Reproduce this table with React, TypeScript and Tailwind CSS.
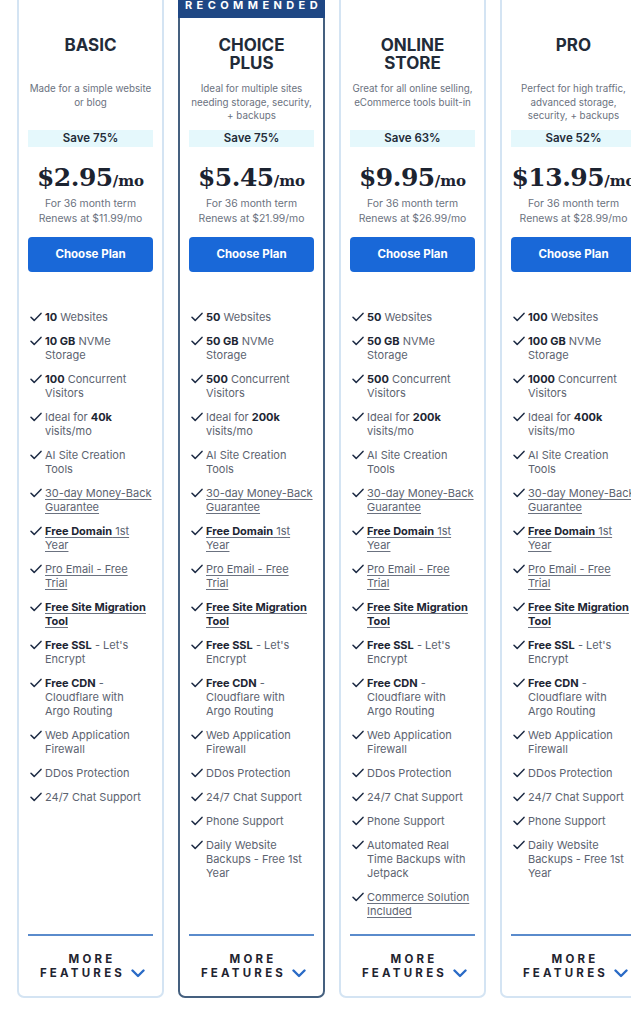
import React from 'react';

type Seg = { t: string; b?: boolean; u?: boolean };
type Feature = Seg[];

type Plan = {
  name: string[];
  desc: string;
  save: string;
  price: string;
  renew: string;
  recommended?: boolean;
  features: Feature[];
};

const s = (t: string): Seg => ({ t });
const b = (t: string): Seg => ({ t, b: true });
const u = (t: string): Seg => ({ t, u: true });
const bu = (t: string): Seg => ({ t, b: true, u: true });

const common = (sites: string, gb: string, visitors: string, visits: string): Feature[] => [
  [b(sites), s(' Websites')],
  [b(gb), s(' NVMe Storage')],
  [b(visitors), s(' Concurrent Visitors')],
  [s('Ideal for '), b(visits), s(' visits/mo')],
  [s('AI Site Creation Tools')],
  [u('30-day Money-Back Guarantee')],
  [bu('Free Domain'), u(' 1st Year')],
  [u('Pro Email - Free Trial')],
  [bu('Free Site Migration Tool')],
  [b('Free SSL'), s(" - Let's Encrypt")],
  [b('Free CDN'), s(' - Cloudflare with\nArgo Routing')],
  [s('Web Application Firewall')],
  [s('DDos Protection')],
  [s('24/7 Chat Support')],
];

const plans: Plan[] = [
  {
    name: ['BASIC'],
    desc: 'Made for a simple website or blog',
    save: 'Save 75%',
    price: '$2.95',
    renew: '$11.99/mo',
    features: common('10', '10 GB', '100', '40k'),
  },
  {
    name: ['CHOICE', 'PLUS'],
    desc: 'Ideal for multiple sites needing storage, security, + backups',
    save: 'Save 75%',
    price: '$5.45',
    renew: '$21.99/mo',
    recommended: true,
    features: [
      ...common('50', '50 GB', '500', '200k'),
      [s('Phone Support')],
      [s('Daily Website Backups - Free 1st Year')],
    ],
  },
  {
    name: ['ONLINE', 'STORE'],
    desc: 'Great for all online selling, eCommerce tools built-in',
    save: 'Save 63%',
    price: '$9.95',
    renew: '$26.99/mo',
    features: [
      ...common('50', '50 GB', '500', '200k'),
      [s('Phone Support')],
      [s('Automated Real Time Backups with Jetpack')],
      [u('Commerce Solution Included')],
    ],
  },
  {
    name: ['PRO'],
    desc: 'Perfect for high traffic, advanced storage,\nsecurity, + backups',
    save: 'Save 52%',
    price: '$13.95',
    renew: '$28.99/mo',
    features: [
      ...common('100', '100 GB', '1000', '400k'),
      [s('Phone Support')],
      [s('Daily Website Backups - Free 1st Year')],
    ],
  },
];

function Check() {
  return (
    <svg width="12" height="10" viewBox="0 0 12 10" className="shrink-0 mt-[2px] -ml-[1px]">
      <path d="M1 5.2 L4.2 8.4 L11 1.4" fill="none" stroke="#1d2b44" strokeWidth="1.5" strokeLinecap="round" strokeLinejoin="round" />
    </svg>
  );
}

function PlanCard({ plan }: { plan: Plan }) {
  return (
    <div
      className={`w-[147px] shrink-0 flex flex-col border-2 rounded-b-[7px] bg-white ${
        plan.recommended ? 'border-[#45607f]' : 'border-[#d4e4f3]'
      }`}
    >
      {plan.recommended ? (
        <div className="-mx-[2px] -mt-[2px] h-[26px] bg-[#1f4784] flex items-center justify-center text-white font-bold text-[11px] tracking-[0.4em] pl-[4px]">
          RECOMMENDED
        </div>
      ) : (
        <div className="h-[24px]" />
      )}

      <div className="px-[9px] flex flex-col flex-1">
        <div className="pt-[18px] h-[54px] text-center text-[17px] font-bold leading-[18px] text-[#222b38]">
          {plan.name.map((n) => (
            <div key={n}>{n}</div>
          ))}
        </div>

        <p className="mt-[10px] -mx-[2px] h-[41px] text-center text-[9.8px] leading-[13.5px] text-[#6b7280] whitespace-pre-line">
          {plan.desc}
        </p>

        <div className="mt-[7px] h-[17px] bg-[#e5f8fc] flex items-center justify-center text-[11.5px] font-semibold text-[#222b38]">
          {plan.save}
        </div>

        <div
          className="mt-[15px] h-[32px] flex items-baseline justify-center text-[#1c2330] font-bold"
          style={{ fontFamily: '"DejaVu Serif", serif' }}
        >
          <span className="text-[25px] leading-[32px] tracking-[-0.5px]">{plan.price}</span>
          <span className="text-[15px]">/mo</span>
        </div>

        <div className="mt-[2px] text-center text-[10.4px] leading-[15px] text-[#6b7280]">
          <div>For 36 month term</div>
          <div>Renews at {plan.renew}</div>
        </div>

        <button className="mt-[11px] h-[35px] w-full rounded-[4px] bg-[#1968d8] text-white text-[11.5px] font-bold">
          Choose Plan
        </button>

        <ul className="mt-[38px] flex-1 flex flex-col gap-[10px] pb-[16px] pl-[3px]">
          {plan.features.map((f, i) => (
            <li key={i} className="flex gap-[3px] text-[11px] leading-[14px]">
              <Check />
              <span className="text-[#5c6370] whitespace-pre-line">
                {f.map((seg, j) => (
                  <span
                    key={j}
                    className={`${seg.b ? 'font-bold text-[#1d2633]' : ''} ${
                      seg.u ? 'underline underline-offset-2 decoration-[#6b7280]' : ''
                    }`}
                  >
                    {seg.t}
                  </span>
                ))}
              </span>
            </li>
          ))}
        </ul>

        <div className="h-[2px] bg-[#5a8bcc]" />
        <div className="pt-[16px] pb-[16px] text-center text-[11.5px] font-bold leading-[14px] tracking-[0.28em] text-[#1f2430]">
          <div className="pl-[3px]">MORE</div>
          <div className="flex items-center justify-center gap-[6px] pl-[4px]">
            <span>FEATURES</span>
            <svg width="14" height="9" viewBox="0 0 14 9">
              <path d="M1.5 1.5 L7 7 L12.5 1.5" fill="none" stroke="#2a6bc6" strokeWidth="2.4" strokeLinecap="round" strokeLinejoin="round" />
            </svg>
          </div>
        </div>
      </div>
    </div>
  );
}

export default function App() {
  return (
    <div className="w-[631px] h-[1009px] overflow-hidden bg-white" style={{ fontFamily: 'Inter, "Noto Sans", sans-serif' }}>
      <div className="-mt-[8px] pl-[17px] flex gap-[14px] items-stretch">
        {plans.map((p) => (
          <PlanCard key={p.price} plan={p} />
        ))}
      </div>
    </div>
  );
}
